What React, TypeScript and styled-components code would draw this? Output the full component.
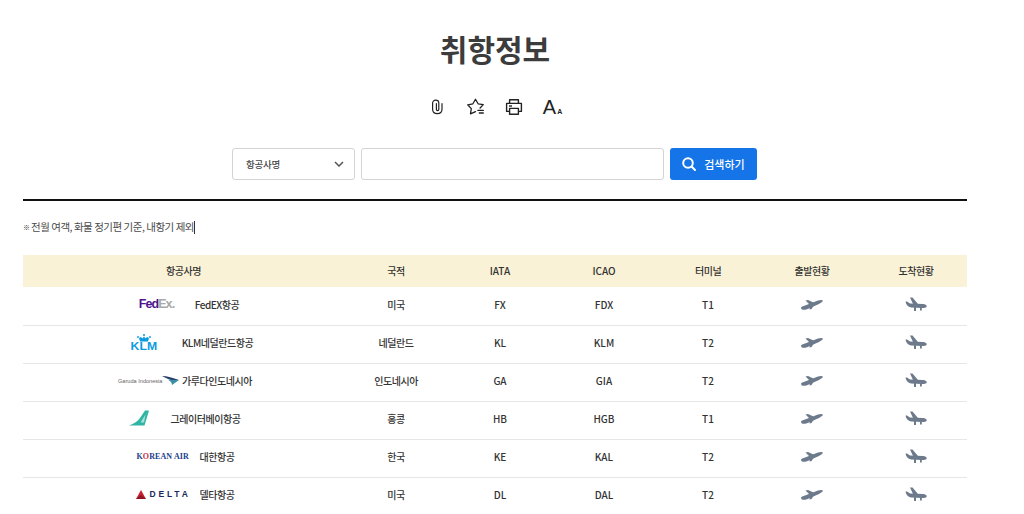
import React from 'react';
import styled, { createGlobalStyle } from 'styled-components';

const GlobalStyle = createGlobalStyle`
  html, body {
    margin: 0;
    padding: 0;
    height: 514px;
    overflow: hidden;
    background: #fff;
    font-family: "Noto Sans CJK KR", "Noto Sans", sans-serif;
  }
`;

const Page = styled.div`
  width: 944px;
  margin-left: 23px;
`;

const Title = styled.h1`
  margin: 0;
  padding-top: 26px;
  height: 48px;
  line-height: 44px;
  font-size: 30px;
  font-weight: 700;
  color: #3c3c3c;
  text-align: center;
`;

const Tools = styled.div`
  display: flex;
  justify-content: center;
  gap: 20px;
  margin-top: 21px;
  height: 24px;
  padding-right: 2px;
`;

const ToolButton = styled.button`
  width: 19px;
  height: 24px;
  padding: 0;
  border: none;
  background: none;
  display: flex;
  align-items: center;
  justify-content: center;
  color: #222;
`;

const FontSizeGlyph = styled.span`
  font-family: "Liberation Sans", sans-serif;
  font-size: 20px;
  color: #222;
  white-space: nowrap;
  small {
    font-size: 7px;
    font-weight: 700;
    margin-left: 1px;
  }
`;

const SearchBar = styled.form`
  display: flex;
  justify-content: center;
  gap: 6px;
  margin: 29px 0 0;
  padding: 0 1px 19px 0;
  border-bottom: 2px solid #111;
`;

const SelectBox = styled.div`
  box-sizing: border-box;
  width: 123px;
  height: 32px;
  padding: 0 10px 0 13px;
  display: flex;
  align-items: center;
  justify-content: space-between;
  border: 1px solid #d4d4d4;
  border-radius: 3px;
  font-size: 9.5px;
  font-weight: 500;
  letter-spacing: -0.25px;
  color: #444;
`;

const SearchInput = styled.input`
  box-sizing: border-box;
  width: 303px;
  height: 32px;
  border: 1px solid #d4d4d4;
  border-radius: 3px;
  outline: none;
`;

const SearchButton = styled.button`
  width: 87px;
  height: 32px;
  padding: 0;
  border: none;
  border-radius: 3px;
  background: #1574e8;
  color: #fff;
  display: flex;
  align-items: center;
  justify-content: center;
  gap: 8px;
  font-family: inherit;
  font-size: 11px;
  font-weight: 500;
`;

const Note = styled.p`
  margin: 17px 0 0;
  height: 18px;
  line-height: 18px;
  font-size: 10.5px;
  letter-spacing: -0.48px;
  color: #4a4a4a;
  display: flex;
  align-items: center;
`;

const NoteMark = styled.span`
  font-size: 7px;
  font-weight: 700;
  letter-spacing: 0;
  width: 8px;
  color: #333;
`;

const Caret = styled.span`
  display: inline-block;
  width: 1px;
  height: 13px;
  background: #333;
`;

const Table = styled.div`
  margin-top: 19px;
`;

const Row = styled.div<{ $head?: boolean }>`
  display: grid;
  grid-template-columns: 321px repeat(6, 104px);
  box-sizing: border-box;
  height: ${p => (p.$head ? '32px' : '38px')};
  padding-bottom: ${p => (p.$head ? '2px' : '5px')};
  margin-bottom: ${p => (p.$head ? '1px' : '0')};
  align-items: center;
  text-align: center;
  font-size: 10px;
  font-weight: 500;
  letter-spacing: -0.45px;
  color: #333;
  background: ${p => (p.$head ? '#faf2d6' : '#fff')};
  border-bottom: ${p => (p.$head ? 'none' : '1px solid #e6e6e6')};
`;

const Code = styled.div`
  letter-spacing: 0;
`;

const AirlineCell = styled.div`
  display: flex;
  justify-content: center;
  align-items: center;
`;

const LogoBox = styled.div<{ $w: number; $pad: number }>`
  box-sizing: border-box;
  width: ${p => p.$w}px;
  padding-left: ${p => p.$pad}px;
  display: flex;
  align-items: center;
  letter-spacing: 0;
`;

const PlaneCell = styled.div`
  display: flex;
  justify-content: center;
  align-items: center;
  color: #6c7a8c;
`;

const FedexMark = styled.span`
  font-family: "Liberation Sans", sans-serif;
  font-size: 12.5px;
  font-weight: 700;
  letter-spacing: -0.9px;
  color: #4d148c;
  white-space: nowrap;
  em {
    font-style: normal;
    color: #a8a8a8;
  }
`;

const KlmMark = styled.span`
  display: flex;
  flex-direction: column;
  align-items: center;
  width: 26px;
  font-family: "Liberation Sans", sans-serif;
  font-size: 10px;
  line-height: 8px;
  font-weight: 700;
  color: #0a9ae0;
`;

const KlmLetters = styled.span`
  display: inline-block;
  transform: scaleX(1.22);
`;

const GarudaMark = styled.span`
  display: flex;
  align-items: flex-end;
  font-family: "Liberation Sans", sans-serif;
  font-size: 5.6px;
  line-height: 7px;
  color: #666;
  white-space: nowrap;
`;

const KoreanMark = styled.span`
  font-family: "Liberation Serif", serif;
  font-size: 8px;
  font-weight: 700;
  letter-spacing: 0.1px;
  color: #1b3f8b;
  white-space: nowrap;
  b {
    color: #c8323c;
  }
`;

const DeltaMark = styled.span`
  display: flex;
  align-items: center;
  gap: 4px;
  font-family: "Liberation Sans", sans-serif;
  font-size: 8.5px;
  font-weight: 700;
  letter-spacing: 2.8px;
  color: #1a2a5e;
`;

const PlaneUp = () => (
  <svg width="22" height="13" viewBox="0 0 22 13" fill="currentColor">
    <path d="M0 10 C0 8.5 2 8 4 7.5 L17 2.5 C19 1.8 21.5 1.6 21.8 2.6 C22 3.8 20 5 18 6 L6 11.2 C3 12.2 0.5 12.2 0 10 Z" />
    <path d="M4.5 2.4 L7 2 L12.5 4.6 L9 7 Z" />
    <path d="M9 8 L13 7 L10.6 11 L8.5 11.4 Z" />
  </svg>
);

const PlaneDown = () => (
  <svg width="22" height="14" viewBox="0 0 22 14" fill="currentColor">
    <path d="M0.5 4.5 L2 4.5 L5 6.5 L18 7 C20.5 7.2 22 8.5 21.8 9.5 C21.5 10.8 19 11 17 11 L6 10.5 C3 10 1 7.5 0.5 4.5 Z" />
    <path d="M5 0.5 L7.5 0.5 L13 7 L8 7 Z" />
    <path d="M9 10 H11 V14 H9 Z M15 10.5 H16.8 V13.5 H15 Z" />
  </svg>
);

type Airline = {
  logo: React.ReactNode;
  logoWidth: number;
  logoPad: number;
  name: string;
  country: string;
  iata: string;
  icao: string;
  terminal: string;
};

const airlines: Airline[] = [
  {
    logo: <FedexMark>Fed<em>Ex.</em></FedexMark>,
    logoWidth: 67,
    logoPad: 11,
    name: 'FedEX항공',
    country: '미국',
    iata: 'FX',
    icao: 'FDX',
    terminal: 'T1',
  },
  {
    logo: (
      <KlmMark>
        <svg width="16" height="9" viewBox="0 0 16 9" fill="#0a9ae0">
          <circle cx="8" cy="1" r="1" />
          <circle cx="2" cy="3" r="0.9" />
          <circle cx="14" cy="3" r="0.9" />
          <path d="M3 4 L5 3 L6.4 4.6 L8 2.6 L9.6 4.6 L11 3 L13 4 L12 7.4 L4 7.4 Z" />
        </svg>
        <KlmLetters>KLM</KlmLetters>
      </KlmMark>
    ),
    logoWidth: 68,
    logoPad: 17,
    name: 'KLM네덜란드항공',
    country: '네덜란드',
    iata: 'KL',
    icao: 'KLM',
    terminal: 'T2',
  },
  {
    logo: (
      <GarudaMark>
        Garuda Indonesia
        <svg width="17" height="10" viewBox="0 0 17 10">
          <path d="M0 1 C5 1 11 3 17 5 L10 5.5 C7 4.5 3 2.5 0 1 Z" fill="#27406a" />
          <path d="M6 4.8 L17 5 L10 10 C10 7.5 8 6 6 4.8 Z" fill="#3a8fa6" />
        </svg>
      </GarudaMark>
    ),
    logoWidth: 67,
    logoPad: 3,
    name: '가루다인도네시아',
    country: '인도네시아',
    iata: 'GA',
    icao: 'GIA',
    terminal: 'T2',
  },
  {
    logo: (
      <svg width="22" height="16" viewBox="0 0 22 16">
        <path d="M1 15.5 C6 14 10 11 12 8 L17 0.5 L21 0.5 L16.5 15.5 Z" fill="#2fb5a4" />
        <path d="M12.5 12.5 L17.5 4.5 L16 12.5 Z" fill="#a9e2d9" />
      </svg>
    ),
    logoWidth: 44,
    logoPad: 1,
    name: '그레이터베이항공',
    country: '홍콩',
    iata: 'HB',
    icao: 'HGB',
    terminal: 'T1',
  },
  {
    logo: <KoreanMark>K<b>O</b>REAN AIR</KoreanMark>,
    logoWidth: 67,
    logoPad: 4,
    name: '대한항공',
    country: '한국',
    iata: 'KE',
    icao: 'KAL',
    terminal: 'T2',
  },
  {
    logo: (
      <DeltaMark>
        <svg width="10" height="9" viewBox="0 0 10 9">
          <path d="M5 0 L10 9 L0 9 Z" fill="#c8202f" />
          <path d="M5 5 L10 9 L0 9 Z" fill="#8e1622" />
        </svg>
        DELTA
      </DeltaMark>
    ),
    logoWidth: 67,
    logoPad: 3,
    name: '델타항공',
    country: '미국',
    iata: 'DL',
    icao: 'DAL',
    terminal: 'T2',
  },
];

export default function App() {
  return (
    <Page>
      <GlobalStyle />
      <Title>취항정보</Title>
      <Tools>
        <ToolButton aria-label="링크">
          <svg width="16" height="18" viewBox="-1 0 16 18" fill="none" stroke="currentColor" strokeWidth="1.2" strokeLinecap="round">
            <path d="M7.4 5.6 V11.6 C7.4 13 9.8 13 9.8 11.6 V5 C9.8 1.2 3.6 1.2 3.6 5 V11.2 C3.6 17 13 17 13 11.2 V5.6" />
          </svg>
        </ToolButton>
        <ToolButton aria-label="즐겨찾기">
          <svg width="19" height="18" viewBox="-1.5 0 19 18" fill="none" stroke="currentColor" strokeWidth="1.3" strokeLinejoin="round" strokeLinecap="round">
            <path d="M13.6 10 L16.8 6.6 L11.6 5.8 L9 1.2 L6.4 5.8 L1.2 6.8 L4.8 10.6 L4 15.8 L9 13.6" />
            <path d="M11.4 12.4 H16.8 M12.8 15 H16.8" />
          </svg>
        </ToolButton>
        <ToolButton aria-label="인쇄">
          <svg width="18" height="18" viewBox="0 0 18 18" fill="none" stroke="currentColor" strokeWidth="1.4" strokeLinejoin="round">
            <path d="M4.6 5 V1.8 H13.4 V5" />
            <path d="M4.4 13.4 H1.6 V5.4 H16.4 V13.4 H13.6" />
            <path d="M4.6 10.4 H13.4 V16.2 H4.6 Z" />
            <path d="M4 8 H7" />
          </svg>
        </ToolButton>
        <ToolButton aria-label="글자 크기">
          <FontSizeGlyph>A<small>A</small></FontSizeGlyph>
        </ToolButton>
      </Tools>
      <SearchBar>
        <SelectBox>
          항공사명
          <svg width="10" height="6" viewBox="0 0 10 6" fill="none" stroke="#555" strokeWidth="1.5">
            <path d="M1 1 L5 5 L9 1" />
          </svg>
        </SelectBox>
        <SearchInput />
        <SearchButton type="button">
          <svg width="14" height="14" viewBox="0 0 14 14" fill="none" stroke="#fff" strokeWidth="2" strokeLinecap="round">
            <circle cx="6" cy="6" r="4.8" />
            <path d="M9.8 9.8 L13 13" />
          </svg>
          검색하기
        </SearchButton>
      </SearchBar>
      <Note><NoteMark>※</NoteMark>전월 여객, 화물 정기편 기준, 내항기 제외<Caret /></Note>
      <Table>
        <Row $head>
          <div>항공사명</div>
          <div>국적</div>
          <Code>IATA</Code>
          <Code>ICAO</Code>
          <div>터미널</div>
          <div>출발현황</div>
          <div>도착현황</div>
        </Row>
        {airlines.map(a => (
          <Row key={a.iata}>
            <AirlineCell>
              <LogoBox $w={a.logoWidth} $pad={a.logoPad}>{a.logo}</LogoBox>
              {a.name}
            </AirlineCell>
            <div>{a.country}</div>
            <Code>{a.iata}</Code>
            <Code>{a.icao}</Code>
            <Code>{a.terminal}</Code>
            <PlaneCell><PlaneUp /></PlaneCell>
            <PlaneCell><PlaneDown /></PlaneCell>
          </Row>
        ))}
      </Table>
    </Page>
  );
}
